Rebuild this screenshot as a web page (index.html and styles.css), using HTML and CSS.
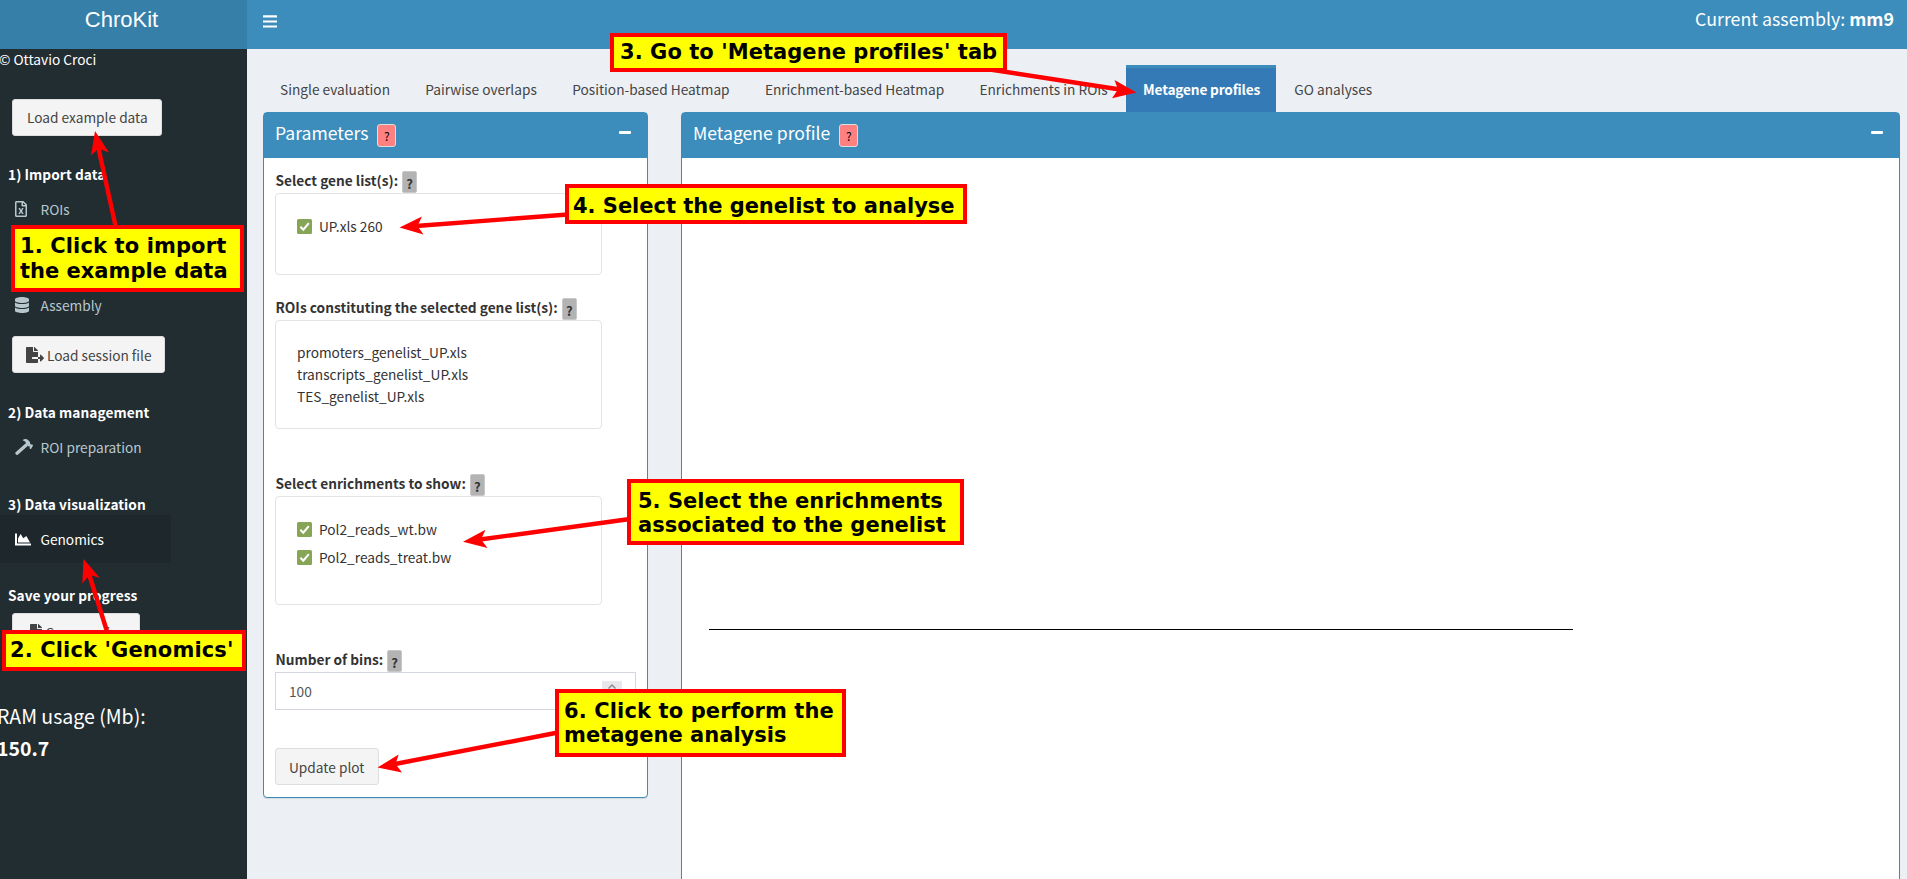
FILE: index.html
```html
<!DOCTYPE html>
<html lang="en">
<head>
<meta charset="utf-8">
<title>ChroKit</title>
<link rel="stylesheet" href="styles.css">
</head>
<body>
<header class="header">
  <div class="logo">ChroKit</div>
  <nav class="navbar">
    <svg class="toggle" width="14" height="14" viewBox="0 0 14 14"><path d="M.6 1.4h12.8M.6 6.5h12.8M.6 11.5h12.8" stroke="#fff" stroke-width="2.2" stroke-linecap="round"/></svg>
    <div class="assembly">Current assembly: <b>mm9</b></div>
  </nav>
</header>
<div class="layout">
  <aside class="sidebar">
    <div class="copyright">© Ottavio Croci</div>
    <button class="btn side-btn example"><span>Load example data</span></button>
    <h4 class="side-title import">1) Import data</h4>
    <a class="side-item rois"><svg class="ico" viewBox="0 0 384 512" width="12" height="16"><path fill="currentColor" d="M370 98 286 14C277 5 265 0 252 0H48C22 0 0 22 0 48v416c0 27 22 48 48 48h288c27 0 48-21 48-48V132c0-13-5-25-14-34zM332 128h-76V52zM48 464V48h160v104c0 13 11 24 24 24h104v288zM260 224h-29c-4 0-8 2-11 6-18 33-22 42-28 55-15-28-5-10-28-55-2-4-6-6-10-6h-29c-10 0-15 10-10 18l46 78-46 78c-5 8 0 18 10 18h29c4 0 8-2 11-6 22-40 23-43 27-55 15 31 6 15 28 55 2 4 7 6 11 6h29c9 0 15-10 10-18-37-62-10-17-46-78l46-78c5-8-1-18-10-18z"/></svg><span>ROIs</span></a>
    <a class="side-item assembly-item"><svg class="ico" viewBox="0 0 448 512" width="14" height="16"><path fill="currentColor" d="M448 73v46c0 40-100 73-224 73S0 159 0 119V73C0 33 100 0 224 0s224 33 224 73zm0 103v103c0 40-100 73-224 73S0 319 0 279V176c48 33 136 49 224 49s176-16 224-49zm0 160v103c0 40-100 73-224 73S0 479 0 439V336c48 33 136 49 224 49s176-16 224-49z"/></svg><span>Assembly</span></a>
    <button class="btn side-btn session"><svg class="ico" viewBox="0 0 576 512" width="18" height="16"><path fill="currentColor" d="M384 122v6H256V0h6c6 0 12 3 17 7l98 98c4 5 7 11 7 17zm187 218-95-96c-10-10-28-3-28 12v64h-64v64h64v65c0 14 18 21 28 11l95-96c6-7 6-17 0-24zM192 336v32c0 9 7 16 16 16h176v104c0 13-11 24-24 24H24c-13 0-24-11-24-24V24C0 11 11 0 24 0h200v136c0 13 11 24 24 24h136v160H208c-9 0-16 7-16 16z"/></svg><span>Load session file</span></button>
    <h4 class="side-title management">2) Data management</h4>
    <a class="side-item prep"><svg class="ico" viewBox="0 0 18 16" width="18" height="16"><path fill="currentColor" d="M17.800 6.100 17.100 5.400Q16.700 5 16.400 5.400L16 5.700 15.100 4.800Q15.400 3.400 14.500 2.500L13.300 1.300C11.700-.3 9.200-.3 7.600 1.300L10.500 2.700V3.300Q10.500 4.500 11.400 5.400L13 7Q13.900 7.800 15.200 7.400L14.900 8.100 14.600 8.500Q14.300 8.900 14.600 9.200L15.300 9.900Q15.700 10.100 16 9.900L17.800 7Q18.100 6.500 17.800 6.100z"/><path stroke="currentColor" stroke-width="3.300" stroke-linecap="round" d="M11 6.200 2 14.200"/></svg><span>ROI preparation</span></a>
    <h4 class="side-title visualization">3) Data visualization</h4>
    <a class="side-item active"><svg class="ico" viewBox="0 0 512 400" width="16" height="13"><path fill="currentColor" d="M500 328c7 0 12 5 12 12v40c0 7-5 12-12 12H12c-7 0-12-5-12-12V20C0 13 5 8 12 8h40c7 0 12 5 12 12v308zM373 103c-4-7-13-9-20-5l-89 62-72-121c-5-8-17-8-22 1L96 168v128h384z"/></svg><span>Genomics</span></a>
    <h4 class="side-title save">Save your progress</h4>
    <button class="btn side-btn save-btn"><svg class="ico" viewBox="0 0 384 512" width="12" height="16"><path fill="currentColor" d="M384 122v6H256V0h6c6 0 12 3 17 7l98 98c4 5 7 11 7 17zM24 0h200v136c0 13 11 24 24 24h136v328c0 13-11 24-24 24H24c-13 0-24-11-24-24V24C0 11 11 0 24 0z"/></svg><span>Save session</span></button>
    <div class="ram">RAM usage (Mb):<br><b>150.7</b></div>
  </aside>
  <main class="content">
    <ul class="tabs">
      <li>Single evaluation</li>
      <li>Pairwise overlaps</li>
      <li>Position-based Heatmap</li>
      <li>Enrichment-based Heatmap</li>
      <li>Enrichments in ROIs</li>
      <li class="active">Metagene profiles</li>
      <li>GO analyses</li>
    </ul>
    <div class="columns">
      <section class="box params">
        <div class="box-head"><h3>Parameters</h3><span class="help-red">?</span><i class="collapse"></i></div>
        <div class="box-body">
          <div class="label"><span>Select gene list(s):</span><span class="help">?</span></div>
          <div class="list genes"><div class="check"><svg viewBox="0 0 15 15" width="15" height="15"><rect width="15" height="15" rx="1.5" fill="#87a556"/><path d="m3.4 7.8 2.9 2.9 5.5-6.6" fill="none" stroke="#fff" stroke-width="2.1"/></svg><span>UP.xls 260</span></div></div>
          <div class="label roi-label"><span>ROIs constituting the selected gene list(s):</span><span class="help">?</span></div>
          <div class="list roi-list"><p>promoters_genelist_UP.xls</p><p>transcripts_genelist_UP.xls</p><p>TES_genelist_UP.xls</p></div>
          <div class="label enr-label"><span>Select enrichments to show:</span><span class="help">?</span></div>
          <div class="list enr-list">
            <div class="check"><svg viewBox="0 0 15 15" width="15" height="15"><rect width="15" height="15" rx="1.5" fill="#87a556"/><path d="m3.4 7.8 2.9 2.9 5.5-6.6" fill="none" stroke="#fff" stroke-width="2.1"/></svg><span>Pol2_reads_wt.bw</span></div>
            <div class="check"><svg viewBox="0 0 15 15" width="15" height="15"><rect width="15" height="15" rx="1.5" fill="#87a556"/><path d="m3.4 7.8 2.9 2.9 5.5-6.6" fill="none" stroke="#fff" stroke-width="2.1"/></svg><span>Pol2_reads_treat.bw</span></div>
          </div>
          <div class="label bins-label"><span>Number of bins:</span><span class="help">?</span></div>
          <div class="number"><span>100</span><svg class="spin" width="20" height="20" viewBox="0 0 20 20"><rect width="20" height="20" fill="#e8e8ec"/><path d="m6.5 7.5 3.5-3.5 3.5 3.5" fill="none" stroke="#8b8b93" stroke-width="1.5"/></svg></div>
          <button class="btn update"><span>Update plot</span></button>
        </div>
      </section>
      <section class="box profile">
        <div class="box-head"><h3>Metagene profile</h3><span class="help-red">?</span><i class="collapse"></i></div>
        <div class="plot"><div class="axis"></div></div>
      </section>
    </div>
  </main>
</div>
<svg class="arrows" width="1907" height="879" viewBox="0 0 1907 879">
  <g stroke="#f00" stroke-width="4.4">
    <path d="M116 228 98 146M107.500 633 89 574M990 69.500 1120 89.500M568 214.500 416 226M630 519 480 539.500M558 732.500 395 764"/>
  </g>
  <g fill="#f00">
    <path d="M95 131 109 152.500 98.500 148.500 91 155.500z"/>
    <path d="M83.500 559 99.800 577.800 89.500 575 82.300 583.500z"/>
    <path d="M1136.500 92.500 1112 98.300 1118 89.500 1114.500 80z"/>
    <path d="M399.500 227.500 422 216.500 417.500 226 423.500 234.500z"/>
    <path d="M463 541.800 485.500 529.800 481 539.500 487.500 548z"/>
    <path d="M377.500 767.500 398.700 754.500 395.500 764 402 772.500z"/>
  </g>
</svg>
<div class="note n1"><span class="wide">1. Click to import</span><br>the example data</div>
<div class="note n2"><span class="wide">2. Click 'Genomics'</span></div>
<div class="note n3">3. Go to 'Metagene profiles' tab</div>
<div class="note n4">4. Select the genelist to analyse</div>
<div class="note n5">5. Select the enrichments<br>associated to the genelist</div>
<div class="note n6"><span class="wide">6. Click to perform the</span><br><span>metagene analysis</span></div>
</body>
</html>
```

FILE: styles.css
```css
* { box-sizing: border-box; }
body {
  margin: 0;
  width: 1907px;
  height: 879px;
  overflow: hidden;
  position: relative;
  background: #ecf0f5;
  color: #333;
  font: 13.7px/22px "Noto Sans CJK SC", "Noto Sans", sans-serif;
  white-space: nowrap;
}
h3, h4, p, ul { margin: 0; padding: 0; font-weight: normal; }
svg { flex: none; }
.header { display: flex; height: 49px; color: #fff; }
.logo {
  width: 247px;
  background: #367fa9;
  text-align: center;
  font: 22px/39px "Liberation Sans", Arial, sans-serif;
  padding-right: 4px;
}
.navbar {
  flex: 1;
  display: flex;
  justify-content: space-between;
  align-items: flex-start;
  background: #3c8dbc;
  padding: 0 13px 0 16px;
}
.toggle { margin-top: 15px; }
.assembly { font-size: 17.8px; line-height: 37px; }
.layout { display: flex; height: 830px; }
.sidebar { width: 247px; background: #222d32; color: #fff; }
.copyright { line-height: 20px; margin-left: -1px; }
.btn {
  display: flex;
  align-items: center;
  height: 37px;
  padding: 0 14px 1px;
  border: 1px solid #ddd;
  border-radius: 3px;
  background: #f4f4f4;
  color: #444;
  font: inherit;
}
.side-btn { margin-left: 12px; }
.example { width: 150px; margin-top: 30px; }
.session { width: 153px; margin-top: 7px; padding: 0 14px 0 13px; gap: 3px; }
.save-btn { width: 128px; margin-top: 8px; padding: 1px 14px 0 17px; gap: 4px; }
.side-title { line-height: 21px; height: 20px; margin-left: 8px; font-size: 13.7px; font-weight: bold; letter-spacing: .06px; }
.import { margin-top: 28px; }
.management { margin-top: 29px; }
.visualization { margin-top: 23px; }
.save { margin-top: 22px; }
.side-item { display: flex; align-items: center; width: 171px; height: 48px; margin-top: 1px; color: #b8c7ce; }
.side-item .ico { margin-left: 15px; margin-right: calc(25.5px - var(--w)); }
.rois { --w: 12px; }
.assembly-item { --w: 14px; margin-top: 48px; }
.prep { --w: 18px; }
.side-item.active { --w: 16px; background: #1e282c; color: #fff; }
.ram { margin: 50px 0 0 -3px; font-size: 19.5px; line-height: 31.5px; }
.content { flex: 1; padding: 16px 7px 0 16px; overflow: hidden; }
.tabs { display: flex; gap: 1.3px; height: 47px; list-style: none; color: #444; }
.tabs li { padding: 3px 17px 0; line-height: 43px; }
.tabs .active {
  width: 150px;
  padding-top: 0;
  border-top: 3px solid #3c8dbc;
  background: #337ab7;
  color: #fff;
  font-weight: bold;
  letter-spacing: -.18px;
}
.columns { display: flex; gap: 33px; align-items: flex-start; }
.box { border: 1px solid #3c8dbc; border-radius: 4px; background: #fff; box-shadow: 0 1px 1px rgba(0,0,0,.1); }
.params { width: 385px; height: 686px; }
.profile { width: 1219px; height: 900px; }
.box-head { display: flex; height: 45px; padding: 0 16px 0 11px; background: #3c8dbc; color: #fff; }
.box-head h3 { font-size: 17.6px; line-height: 39px; }
.help-red {
  width: 19px;
  height: 23px;
  margin: 11px 0 0 9px;
  border: 1px solid #ddd;
  border-radius: 3px;
  background: #ff8080;
  color: #000;
  font-size: 12px;
  line-height: 21px;
  text-align: center;
}
.collapse { width: 12px; height: 3px; margin: 18px 0 0 auto; border-radius: 1px; background: #fff; }
.box-body { padding: 13px 11px 0; }
.label { display: flex; height: 22px; font-weight: bold; line-height: 19px; padding-left: .5px; }
.help {
  width: 15px;
  height: 22px;
  margin-left: 4px;
  border: 1px solid #c8c8c8;
  border-radius: 2px;
  background: #b3b3b3;
  font-size: 13px;
  line-height: 24px;
  text-align: center;
}
.list { width: 327px; padding: 20.500px 21px 0; border: 1px solid #e3e3e3; border-radius: 4px; }
.genes { height: 82px; }
.roi-list, .enr-list { height: 109px; }
.roi-list { padding-top: 20px; }
.check { display: flex; align-items: center; gap: 7px; height: 28px; margin-top: -2px; }
.check span { padding-bottom: 2px; }
.check + .check { margin-top: 0; }
.roi-label { margin-top: 23px; }
.enr-label { margin-top: 45px; }
.bins-label { margin-top: 45px; }
.number { display: flex; justify-content: space-between; width: 361px; height: 38px; padding: 0 13px; border: 1px solid #d2d6de; color: #555; line-height: 36px; }
.spin { margin-top: 8px; }
.update { margin-top: 38px; width: 104px; padding: 0 13px; }
.plot { padding: 471px 0 0 27px; }
.axis { width: 864px; height: 1px; background: #000; }
.arrows { position: absolute; left: 0; top: 0; }
.note {
  position: absolute;
  border: 4px solid #f00;
  background: #ff0;
  color: #000;
  font: bold 21px/24px "DejaVu Sans", sans-serif;
}
.wide { letter-spacing: .12px; }
.n1 { left: 11px; top: 225px; width: 233px; height: 67px; padding: 4.500px 0 0 5px; line-height: 25px; }
.n2 { left: 2px; top: 630px; width: 244px; height: 41px; padding: 4px 0 0 4px; }
.n3 { left: 610px; top: 33px; width: 397px; height: 39px; padding: 3px 0 0 6px; letter-spacing: .06px; }
.n4 { left: 565px; top: 184px; width: 402px; height: 40px; padding: 6px 0 0 4px; letter-spacing: -.03px; }
.n5 { left: 627px; top: 479px; width: 337px; height: 66px; padding: 6px 0 0 7px; }
.n6 { left: 555px; top: 689px; width: 291px; height: 68px; padding: 6px 0 0 5px; }
```
